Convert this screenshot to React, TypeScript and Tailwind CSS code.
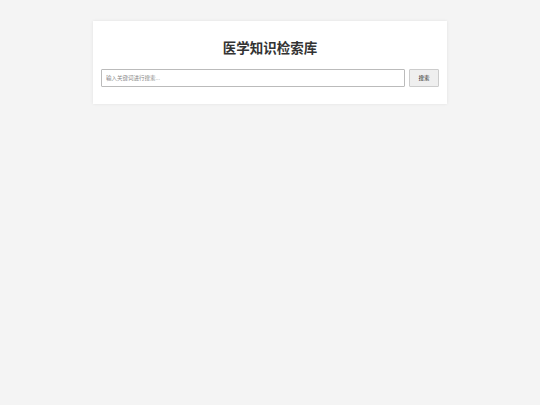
export default function App() {
  return (
    <div
      className="min-h-[405px] bg-[#f4f4f4] pt-[21px]"
      style={{ fontFamily: '"Liberation Sans", "Noto Sans CJK SC", sans-serif' }}
    >
      <div className="mx-auto w-[354px] bg-white px-2 pt-[15px] pb-[17px] shadow-[0_0_3px_rgba(0,0,0,0.08)]">
        <h1 className="text-center text-[13.5px] font-bold leading-[26px] text-[#333]">
          医学知识检索库
        </h1>
        <div className="mt-[7px] flex gap-1">
          <input
            className="h-[18px] flex-1 rounded-[1px] border border-[#bbb] px-[4px] text-[5.5px] text-[#333] outline-none placeholder:text-[#888]"
            placeholder="输入关键词进行搜索..."
          />
          <button className="h-[18px] w-[30px] rounded-[1px] border border-[#ccc] bg-[#efefef] text-[5.5px] text-[#222]">
            搜索
          </button>
        </div>
      </div>
    </div>
  );
}
